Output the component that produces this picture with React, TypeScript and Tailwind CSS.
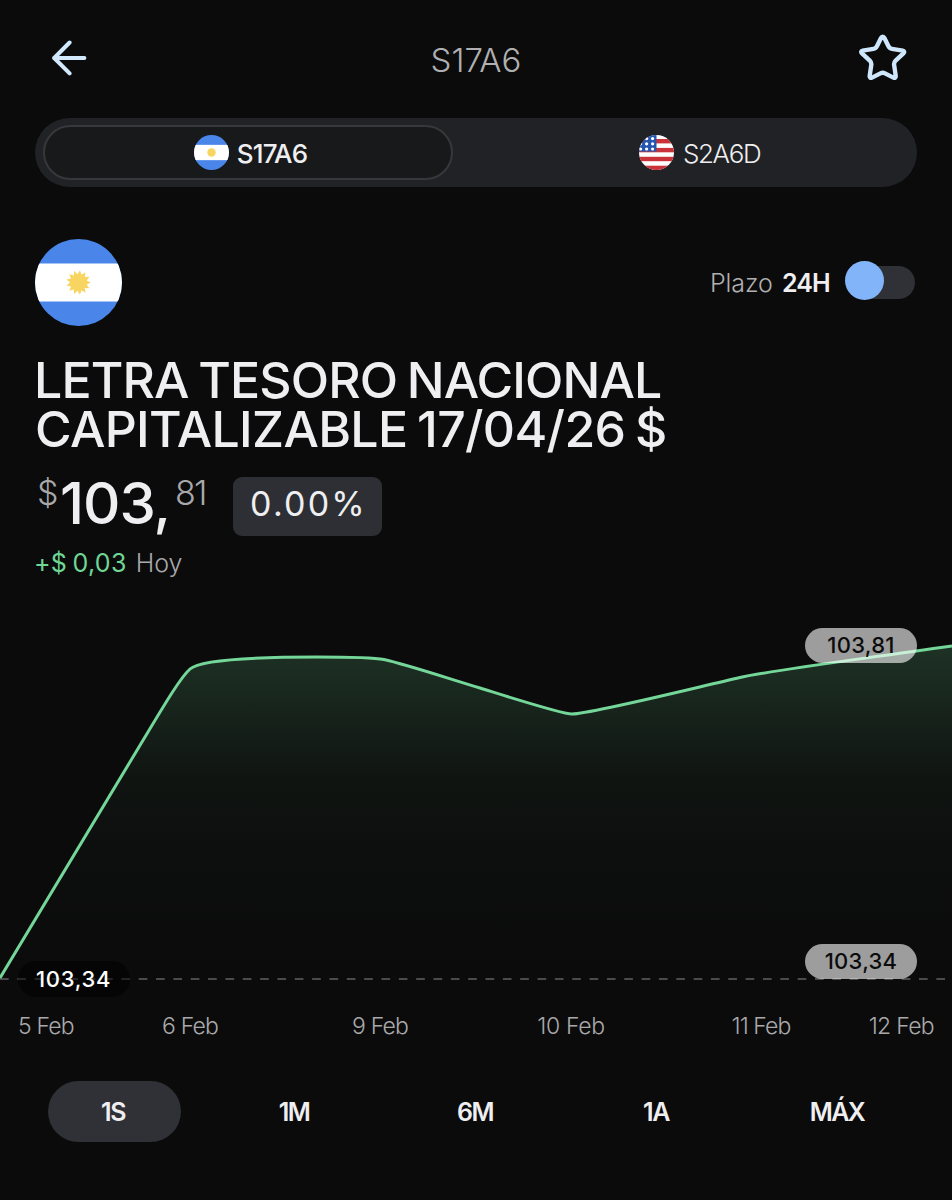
import clsx from 'clsx';

const SUN_POINTS = Array.from({ length: 26 }, (_, i) => {
  const r = i % 2 === 0 ? 12.4 : 8.4;
  const a = (i * Math.PI) / 13;
  return `${(43.5 + r * Math.cos(a)).toFixed(2)},${(43.5 + r * Math.sin(a)).toFixed(2)}`;
}).join(' ');

const FlagAr = ({ className, id, small = false }: { className: string; id: string; small?: boolean }) => (
  <svg className={className} viewBox="0 0 87 87">
    <clipPath id={id}>
      <circle cx="43.5" cy="43.5" r="43.5" />
    </clipPath>
    <g clipPath={`url(#${id})`}>
      <rect width="87" height="87" fill="#4a86ea" />
      <rect y="24.5" width="87" height="38" fill="#fff" />
      {small ? (
        <circle cx="43.5" cy="43.5" r="10.5" fill="#f7d560" />
      ) : (
        <polygon points={SUN_POINTS} fill="#f7d560" />
      )}
    </g>
  </svg>
);

const FlagUs = ({ className }: { className: string }) => (
  <svg className={className} viewBox="0 0 35 35">
    <clipPath id="us">
      <circle cx="17.5" cy="17.5" r="17.5" />
    </clipPath>
    <g clipPath="url(#us)">
      <rect width="35" height="35" fill="#fff" />
      {[4, 12.9, 21.8, 30.7].map((y) => (
        <rect key={y} y={y} width="35" height="4.4" fill="#cb333b" />
      ))}
      <rect width="17.5" height="16.5" fill="#2456b0" />
      {[3.6, 8.8, 14].map((y) =>
        [1.6, 7.6, 13.6].map((x) => <circle key={`${x}-${y}`} cx={x} cy={y} r="1.6" fill="#fff" />)
      )}
    </g>
  </svg>
);

const BackIcon = () => (
  <svg className="h-[36px] w-[36px]" viewBox="0 0 36 36" fill="none" stroke="#d2e8fd" strokeWidth="4">
    <path d="M33.4 18H3M18.6 2.5L3.2 18L18.6 33.4" strokeLinecap="round" strokeLinejoin="round" />
  </svg>
);

const StarIcon = () => (
  <svg className="h-[48px] w-[48px]" viewBox="0 0 48 48" fill="none" stroke="#cfe7fd" strokeWidth="4.4">
    <path
      d="M23.7 2.6C22.9 2.6 22.4 3.2 22 4L17.8 12.4Q16.8 14.6 14.5 14.9L3.6 16.6C2 16.9 1.8 18.3 3 19.4L10.8 26.7Q12.6 28.4 12.3 30.8L10.7 41.8C10.5 43.7 11.6 44.3 13 43.6L21.4 39.4Q23.7 38.2 26 39.4L34.4 43.6C35.8 44.3 36.9 43.7 36.7 41.8L35.1 30.8Q34.8 28.4 36.6 26.7L44.4 19.4C45.6 18.3 45.4 16.9 43.8 16.6L32.9 14.9Q30.6 14.6 29.6 12.4L25.4 4C25 3.2 24.5 2.6 23.7 2.6Z"
      strokeLinejoin="round"
    />
  </svg>
);

const LINE =
  'M0 978L148 732C166 702 181 677 190 669C199 661 237 657 317 657C350 657 374 657.5 384 659.5C405 664 450 679 480 688C520 700.5 562 714 572 714C590 714 690 689 740 677.5C775 670 810 666 952 646';

const dates = [
  { label: '5 Feb', className: 'pl-[18px] tracking-[-0.8px]' },
  { label: '6 Feb', className: 'justify-center tracking-[-0.8px]' },
  { label: '9 Feb', className: 'justify-center tracking-[-0.8px]' },
  { label: '10 Feb', className: 'justify-center tracking-[-0.3px]' },
  { label: '11 Feb', className: 'justify-center pr-[2px] tracking-[-0.9px]' },
  { label: '12 Feb', className: 'justify-end pr-[18px] tracking-[-0.7px]' },
];

const ranges = ['1S', '1M', '6M', '1A', 'MÁX'];

const App = () => (
  <div className="flex h-[1200px] w-[952px] flex-col overflow-hidden bg-[#0b0b0b] font-['Inter',sans-serif] text-[#efeff1]">
    {
      //Header
    }
    <div className="grid h-[118px] grid-cols-[1fr_auto_1fr] items-center pr-[45px] pl-[51px]">
      <div className="-mt-[2px]">
        <BackIcon />
      </div>
      <h1 className="mt-[3px] ml-[-6px] text-[33px] font-light text-[#b0b0b2]">S17A6</h1>
      <div className="-mt-[3px] flex justify-end">
        <StarIcon />
      </div>
    </div>

    {
      //Currency tabs
    }
    <div className="mr-[35px] ml-[35px] flex h-[69px] items-center rounded-full bg-[#212226] pl-[8px]">
      <div className="flex h-[55px] w-[410px] items-center justify-center gap-[8px] rounded-full border-2 border-[#37383c] bg-[#18191b] pl-[5px]">
        <FlagAr id="ar-tab" className="h-[35px] w-[35px]" small />
        <span className="pt-[2px] text-[26px] font-medium tracking-[-0.77px]">S17A6</span>
      </div>
      <div className="flex flex-1 items-center gap-[8px] pl-[186px]">
        <FlagUs className="h-[35px] w-[35px]" />
        <span className="pt-[2px] pl-[1px] text-[26px] font-light tracking-[-1.4px]">S2A6D</span>
      </div>
    </div>

    {
      //Instrument
    }
    <div className="mt-[51px] flex h-[88px] items-center justify-between pr-[37px] pl-[34.5px]">
      <FlagAr id="ar" className="h-[87px] w-[87px]" />
      <div className="flex items-center text-[25px]">
        <span className="mt-[3px] w-[72px] font-light tracking-[-0.12px] text-[#b0b0b2]">Plazo</span>
        <span className="mt-[3px] w-[63px] font-semibold tracking-[-0.9px]">24H</span>
        <div className="-mt-[3px] flex h-[39px] w-[70px] items-center">
          <div className="z-10 h-[39px] w-[39px] shrink-0 rounded-full bg-[#81b4f8]" />
          <div className="mt-[3px] -ml-[34px] h-[33px] w-[65px] shrink-0 rounded-full bg-[#2f3136]" />
        </div>
      </div>
    </div>
    <h2 className="mt-[30px] pl-[34px] text-[50px] leading-[49px] font-medium">
      <span className="block tracking-[-0.85px] [word-spacing:-3px]">LETRA TESORO NACIONAL</span>
      <span className="block pl-[1px] tracking-[-0.67px] [word-spacing:-3px]">CAPITALIZABLE 17/04/26 $</span>
    </h2>
    <div className="mt-[23px] flex h-[59px] items-start pl-[37px]">
      <span className="w-[23px] text-[34px] leading-[32px] font-light text-[#a9a9ab]">$</span>
      <span className="w-[115px] text-[58px] leading-[53px] font-medium tracking-[-1px]">103,</span>
      <span className="w-[58px] text-[34px] leading-[32px] font-light tracking-[-1.8px] text-[#a9a9ab]">81</span>
      <span className="flex h-[59px] w-[149px] justify-center rounded-[9px] bg-[#2d2f34] pl-[2px] text-[34px] leading-[54px] tracking-[2.2px]">
        0.00%
      </span>
    </div>
    <div className="mt-[12px] flex h-[32px] items-center gap-[9px] pl-[34px] text-[25px]">
      <span className="tracking-[0.3px] text-[#6fd795] [word-spacing:-2px]">+$ 0,03</span>
      <span className="font-light text-[#a9a9ab]">Hoy</span>
    </div>

    {
      //Chart
    }
    <div className="relative mt-[20px] h-[400px]">
      <svg className="block h-[400px] w-[952px]" viewBox="0 600 952 400" fill="none">
        <defs>
          <linearGradient id="area" gradientUnits="userSpaceOnUse" x1="0" x2="0" y1="646" y2="978">
            <stop offset="0" stopColor="#6fd795" stopOpacity="0.19" />
            <stop offset="0.18" stopColor="#6fd795" stopOpacity="0.125" />
            <stop offset="0.4" stopColor="#6fd795" stopOpacity="0.045" />
            <stop offset="0.65" stopColor="#6fd795" stopOpacity="0.015" />
            <stop offset="1" stopColor="#6fd795" stopOpacity="0" />
          </linearGradient>
        </defs>
        <path d={`${LINE}V978H0Z`} fill="url(#area)" />
        <path d="M0 979H952" stroke="#4b4b4d" strokeWidth="2" strokeDasharray="8.67 8.67" />
        <path d={LINE} stroke="#74d799" strokeWidth="3" strokeLinejoin="round" />
      </svg>
      <div className="absolute top-[361px] left-[18px] h-[36px] w-[112px] rounded-full bg-black/50 pl-[18px] text-[22px] leading-[36px] font-medium tracking-[0.69px] text-white">
        103,34
      </div>
      <div className="absolute top-[28px] left-[805px] h-[35px] w-[112px] rounded-full bg-white/60 text-center text-[22px] leading-[34px] font-medium tracking-[0.28px] text-[#0b0b0b]">
        103,81
      </div>
      <div className="absolute top-[344px] left-[805px] h-[35px] w-[112px] rounded-full bg-white/60 text-center text-[22px] leading-[35px] font-medium tracking-[0.29px] text-[#0b0b0b]">
        103,34
      </div>
    </div>
    <div className="mt-[9px] grid grid-cols-[95px_190px_190px_192px_190px_95px] text-[23px] leading-[34px] font-light whitespace-nowrap text-[#a9a9ab]">
      {dates.map((d) => (
        <div key={d.label} className={clsx('flex', d.className)}>
          {d.label}
        </div>
      ))}
    </div>

    {
      //Range selector
    }
    <div className="mt-[38px] grid grid-cols-[repeat(5,181px)] justify-items-center pl-[24px]">
      {ranges.map((range, i) => (
        <button
          key={range}
          className={clsx(
            'h-[61px] w-[133px] rounded-full pr-[3px] text-[25px] leading-[63px] font-semibold tracking-[-1.5px]',
            i === 0 && 'bg-[#2f3136]'
          )}
        >
          {range}
        </button>
      ))}
    </div>
  </div>
);

export default App;
